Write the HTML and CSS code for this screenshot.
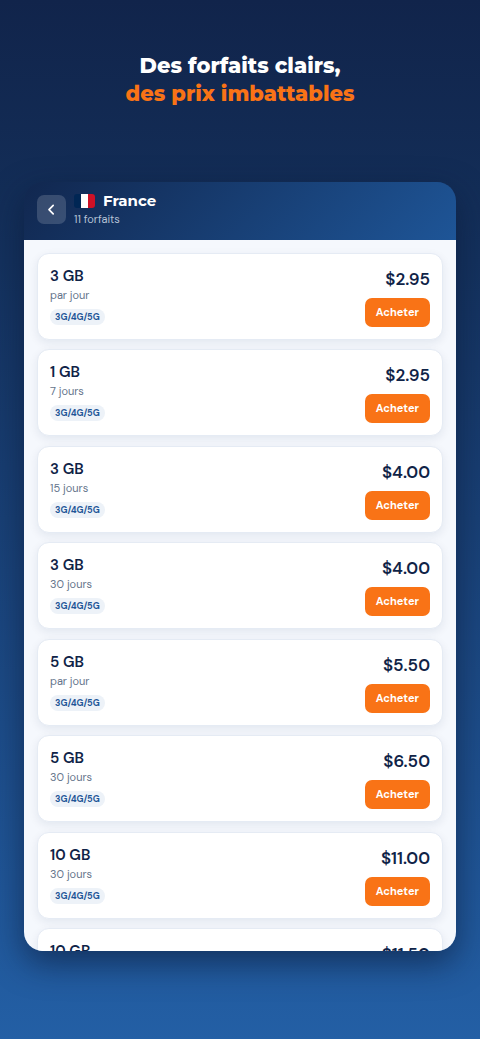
FILE: index.html
```html
<!DOCTYPE html>
<html lang="fr">
<head>
<meta charset="utf-8">
<meta name="viewport" content="width=device-width, initial-scale=1">
<title>Forfaits France</title>
<link rel="stylesheet" href="styles.css">
</head>
<body>
<main class="page">
  <h1 class="headline">Des forfaits clairs,<br><span class="accent">des prix imbattables</span></h1>
  <section class="panel" aria-labelledby="country">
    <header class="panel-header">
      <button class="back" type="button" aria-label="Retour">
        <svg width="9" height="13" viewBox="0 0 9 13" fill="none" stroke="currentColor" stroke-width="1.7" stroke-linecap="round" stroke-linejoin="round"><path d="M6.2 2.4 2 6.7l4.2 4.2"/></svg>
      </button>
      <div>
        <h2 class="country" id="country">
          <svg class="flag" width="21" height="14" viewBox="0 0 21 14" aria-hidden="true"><path fill="#002654" d="M3 0h4v14H3a3 3 0 0 1-3-3V3a3 3 0 0 1 3-3z"/><path fill="#fff" d="M7 0h7v14H7z"/><path fill="#ce1126" d="M14 0h4a3 3 0 0 1 3 3v8a3 3 0 0 1-3 3h-4z"/></svg>
          France
        </h2>
        <p class="count">11 forfaits</p>
      </div>
    </header>
    <ul class="plans">
      <li class="plan"><div class="info"><h3 class="data">3 GB</h3><p class="period">par jour</p><span class="badge">3G/4G/5G</span></div><div class="offer"><span class="price">$2.95</span><button class="buy" type="button">Acheter</button></div></li>
      <li class="plan"><div class="info"><h3 class="data">1 GB</h3><p class="period">7 jours</p><span class="badge">3G/4G/5G</span></div><div class="offer"><span class="price">$2.95</span><button class="buy" type="button">Acheter</button></div></li>
      <li class="plan"><div class="info"><h3 class="data">3 GB</h3><p class="period">15 jours</p><span class="badge">3G/4G/5G</span></div><div class="offer"><span class="price">$4.00</span><button class="buy" type="button">Acheter</button></div></li>
      <li class="plan"><div class="info"><h3 class="data">3 GB</h3><p class="period">30 jours</p><span class="badge">3G/4G/5G</span></div><div class="offer"><span class="price">$4.00</span><button class="buy" type="button">Acheter</button></div></li>
      <li class="plan"><div class="info"><h3 class="data">5 GB</h3><p class="period">par jour</p><span class="badge">3G/4G/5G</span></div><div class="offer"><span class="price">$5.50</span><button class="buy" type="button">Acheter</button></div></li>
      <li class="plan"><div class="info"><h3 class="data">5 GB</h3><p class="period">30 jours</p><span class="badge">3G/4G/5G</span></div><div class="offer"><span class="price">$6.50</span><button class="buy" type="button">Acheter</button></div></li>
      <li class="plan"><div class="info"><h3 class="data">10 GB</h3><p class="period">30 jours</p><span class="badge">3G/4G/5G</span></div><div class="offer"><span class="price">$11.00</span><button class="buy" type="button">Acheter</button></div></li>
      <li class="plan"><div class="info"><h3 class="data">10 GB</h3></div><div class="offer"><span class="price">$11.50</span></div></li>
    </ul>
  </section>
</main>
</body>
</html>
```

FILE: styles.css
```css
* {
  box-sizing: border-box;
  margin: 0;
  padding: 0;
}

body {
  font-family: "DM Sans", Inter, "Liberation Sans", sans-serif;
  color: #0f2347;
}

.page {
  display: flex;
  flex-direction: column;
  gap: 74px;
  min-height: 100vh;
  padding: 52px 24px 88px;
  background: linear-gradient(180deg, #11244b 0%, #132e58 20%, #1a437a 55%, #235fa5 100%);
}

.headline {
  font-family: Montserrat, Inter, sans-serif;
  font-size: 21px;
  font-weight: 800;
  line-height: 28px;
  text-align: center;
  color: #fff;
}

.accent {
  color: #f97316;
}

.panel {
  display: flex;
  flex: 1;
  flex-direction: column;
  overflow: hidden;
  border-radius: 19px;
  box-shadow: 0 12px 32px rgba(10, 25, 55, 0.6);
}

.panel-header {
  display: flex;
  align-items: center;
  gap: 8px;
  height: 58px;
  padding: 0 13px 4px;
  background: linear-gradient(135deg, #11274f 0%, #1e5597 100%);
  color: #fff;
}

.back {
  display: grid;
  place-items: center;
  width: 29px;
  height: 29px;
  border: 0;
  border-radius: 7px;
  background: rgba(255, 255, 255, 0.16);
  color: #fff;
}

.country {
  display: flex;
  align-items: center;
  gap: 8px;
  font-family: Montserrat, Inter, sans-serif;
  font-size: 15px;
  font-weight: 700;
  line-height: 20px;
}

.count {
  font-size: 11px;
  line-height: 16px;
  color: #b7c3d6;
}

/* The list runs past the panel's bottom edge, where the last plan is cut off. */
.plans {
  display: flex;
  flex: 1;
  flex-direction: column;
  justify-content: space-between;
  gap: 9px;
  margin-bottom: -64px;
  padding: 13px 13px 0;
  background: #f5f8fd;
  list-style: none;
}

.plan {
  display: flex;
  justify-content: space-between;
  min-height: 87px;
  padding: 12px;
  border: 1px solid #e5ebf4;
  border-radius: 12px;
  background: #fff;
  box-shadow: 0 3px 10px rgba(18, 38, 79, 0.08);
}

.info,
.offer {
  display: flex;
  flex-direction: column;
}

.info {
  align-items: flex-start;
}

.offer {
  align-items: flex-end;
  gap: 7px;
  padding-top: 1px;
}

.data {
  font-size: 15px;
  font-weight: 600;
  line-height: 20px;
}

.period {
  margin-bottom: 4px;
  font-size: 11px;
  line-height: 19px;
  color: #64748b;
}

.badge {
  padding: 0 5px;
  border-radius: 8px;
  background: #edf2f8;
  font-size: 9px;
  font-weight: 700;
  line-height: 16px;
  color: #1e5597;
}

.price {
  font-size: 17px;
  font-weight: 600;
  line-height: 24px;
}

.buy {
  height: 29px;
  padding: 0 11px 1px;
  border: 0;
  border-radius: 7px;
  background: #f97316;
  color: #fff;
  font-family: inherit;
  font-size: 11px;
  font-weight: 700;
}
```
